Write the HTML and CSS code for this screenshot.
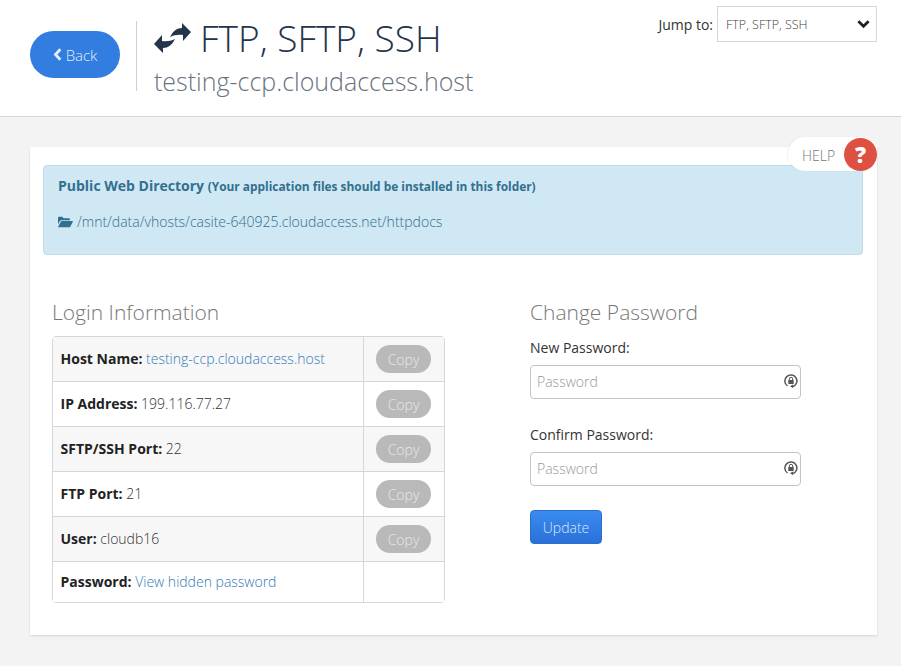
FILE: index.html
```html
<!DOCTYPE html>
<html lang="en">
<head>
  <meta charset="UTF-8" />
  <title>FTP, SFTP, SSH</title>
  <link rel="stylesheet" href="styles.css">
</head>
<body>
  <header class="top-bar">
    <a class="back-btn" href="#">
      <svg class="back-icon" viewBox="0 0 10 16"><path d="M8.500 1.500 2.500 8l6 6.500" fill="none" stroke="currentColor" stroke-width="3.400"/></svg>
      Back
    </a>
    <div class="title-block">
      <h1>
        <svg class="title-icon" viewBox="0 0 37 30"><path d="M37 9 28 0v5C23 5 19 8 16 14c4-2 8-2.500 13-2v6z" fill="#24344a"/><path d="M0 21l9 9v-5c5 0 9-3 12-9-4 2-8 2.500-13 2v-6z" fill="#24344a"/></svg>
        FTP, SFTP, SSH
      </h1>
      <p class="subtitle">testing-ccp.cloudaccess.host</p>
    </div>
    <div class="jump">
      <span>Jump to:</span>
      <div class="jump-select">
        FTP, SFTP, SSH
        <svg class="chevron" viewBox="0 0 14 10"><path d="M1.500 2 7 7.500 12.500 2" fill="none" stroke="#222" stroke-width="3"/></svg>
      </div>
    </div>
  </header>

  <main class="card">
    <div class="help">
      <span>HELP</span>
      <b class="help-dot">?</b>
    </div>

    <div class="alert">
      <p class="alert-title"><strong>Public Web Directory</strong> <small>(Your application files should be installed in this folder)</small></p>
      <p class="alert-path">
        <svg class="folder" viewBox="0 0 16 12"><path d="M0 2c0-1 .5-1.500 1.500-1.500h3L6 2h5.500c.8 0 1.200.4 1.200 1.200V4H4C3 4 2.500 4.300 2 5L0 8.500zM4 5h11c.8 0 1 .5.600 1.200L13 11c-.3.5-.7.700-1.300.7H1c-.8 0-1-.5-.6-1.200L3 5.700C3.300 5.200 3.500 5 4 5z" fill="#31708f"/></svg>
        /mnt/data/vhosts/casite-640925.cloudaccess.net/httpdocs
      </p>
    </div>

    <div class="columns">
      <section class="login">
        <h2>Login Information</h2>
        <table class="info-table">
          <tr>
            <td class="info-cell"><strong>Host Name:</strong> <a href="#">testing-ccp.cloudaccess.host</a></td>
            <td class="copy-cell"><button class="copy-btn">Copy</button></td>
          </tr>
          <tr>
            <td class="info-cell"><strong>IP Address:</strong> 199.116.77.27</td>
            <td class="copy-cell"><button class="copy-btn">Copy</button></td>
          </tr>
          <tr>
            <td class="info-cell"><strong>SFTP/SSH Port:</strong> 22</td>
            <td class="copy-cell"><button class="copy-btn">Copy</button></td>
          </tr>
          <tr>
            <td class="info-cell"><strong>FTP Port:</strong> 21</td>
            <td class="copy-cell"><button class="copy-btn">Copy</button></td>
          </tr>
          <tr>
            <td class="info-cell"><strong>User:</strong> cloudb16</td>
            <td class="copy-cell"><button class="copy-btn">Copy</button></td>
          </tr>
          <tr class="last-row">
            <td class="info-cell"><strong>Password:</strong> <a href="#">View hidden password</a></td>
            <td class="copy-cell"></td>
          </tr>
        </table>
      </section>

      <section class="password">
        <h2>Change Password</h2>
        <label class="field-label">New Password:</label>
        <div class="field">
          <span class="placeholder">Password</span>
          <svg class="lock-icon" viewBox="0 0 14 14"><path d="M3.500 12A6 6 0 1 1 8.500 12.800" fill="none" stroke="#555" stroke-width="1.500"/><path d="M9 10.500V14L6 12.300z" fill="#555"/><rect x="4.300" y="6" width="5.400" height="4" rx=".5" fill="#555"/><path d="M5.300 6.500V5a1.700 1.700 0 0 1 3.400 0v1.500" fill="none" stroke="#555"/></svg>
        </div>
        <label class="field-label">Confirm Password:</label>
        <div class="field">
          <span class="placeholder">Password</span>
          <svg class="lock-icon" viewBox="0 0 14 14"><path d="M3.500 12A6 6 0 1 1 8.500 12.800" fill="none" stroke="#555" stroke-width="1.500"/><path d="M9 10.500V14L6 12.300z" fill="#555"/><rect x="4.300" y="6" width="5.400" height="4" rx=".5" fill="#555"/><path d="M5.300 6.500V5a1.700 1.700 0 0 1 3.400 0v1.500" fill="none" stroke="#555"/></svg>
        </div>
        <button class="update-btn">Update</button>
      </section>
    </div>
  </main>
</body>
</html>
```

FILE: styles.css
```css
html, body {
  height: 100%;
}

body {
  margin: 0;
  padding: 0;
  font-family: 'Open Sans', sans-serif;
  font-size: 14px;
  color: #333;
  background-color: #f3f3f3;
  overflow: hidden;
}

.top-bar {
  display: flex;
  align-items: flex-start;
  height: 116px;
  padding: 0 24px 0 30px;
  background: #fff;
  border-bottom: 1px solid #d6d6d6;
}

.back-btn {
  display: flex;
  align-items: center;
  justify-content: center;
  gap: 4px;
  width: 90px;
  height: 47px;
  margin-top: 31px;
  border-radius: 24px;
  background: #317de0;
  color: #e6effb;
  font-size: 15px;
  font-weight: 300;
  text-decoration: none;
}

.back-icon {
  width: 9px;
  height: 13px;
}

.title-block {
  height: 70px;
  margin: 21px 0 0 16px;
  padding-left: 17px;
  border-left: 1px solid #d0d0d0;
  flex: 1;
}

h1 {
  display: flex;
  align-items: center;
  gap: 9px;
  margin: -1px 0 0;
  font-size: 37px;
  font-weight: 300;
  line-height: 36px;
  color: #24344a;
}

.title-icon {
  width: 37px;
  height: 30px;
}

.subtitle {
  margin: 8px 0 0;
  font-size: 25px;
  font-weight: 300;
  line-height: 34px;
  color: #69727f;
}

.jump {
  display: flex;
  align-items: center;
  gap: 4px;
  margin-top: 6px;
  font-size: 14px;
}

.jump-select {
  display: flex;
  align-items: center;
  justify-content: space-between;
  box-sizing: border-box;
  width: 160px;
  height: 36px;
  padding: 0 6px 0 8px;
  border: 1px solid #d6d6d6;
  font-size: 12.500px;
  font-weight: 300;
  color: #444;
}

.chevron {
  width: 13px;
  height: 10px;
}

.card {
  position: relative;
  margin: 30px 24px 0 30px;
  height: 488px;
  box-sizing: border-box;
  padding: 18px 14px 0 13px;
  background: #fff;
  box-shadow: 0 1px 2px rgba(0, 0, 0, 0.12);
}

.help {
  position: absolute;
  top: -10px;
  right: 0;
  display: flex;
  align-items: center;
  justify-content: space-between;
  box-sizing: border-box;
  width: 89px;
  height: 34px;
  padding-left: 14px;
  border-radius: 17px;
  background: #fff;
  box-shadow: -1px 0 2px rgba(0, 0, 0, 0.05);
  font-size: 14px;
  font-weight: 300;
  color: #777;
}

.help span {
  padding-top: 2px;
}

.help-dot {
  display: block;
  width: 33px;
  height: 33px;
  border-radius: 50%;
  background: #de5041;
  color: #fff;
  font-size: 22px;
  font-weight: 800;
  line-height: 33px;
  text-align: center;
}

.alert {
  box-sizing: border-box;
  height: 90px;
  padding: 11px 14px;
  background: #d0e7f4;
  border: 1px solid #bcdde9;
  border-radius: 4px;
  color: #31708f;
}

.alert p {
  margin: 0;
}

.alert-title {
  font-size: 14px;
  line-height: 17px;
}

.alert-title small {
  font-size: 11.900px;
  font-weight: 700;
}

.alert-path {
  margin-top: 17px !important;
  font-weight: 300;
  line-height: 20px;
  display: flex;
  align-items: center;
  gap: 4px;
}

.folder {
  width: 15px;
  height: 12px;
}

.columns {
  display: flex;
  margin-top: 42px;
  padding-left: 9px;
}

h2 {
  margin: 0 0 9px;
  font-size: 21px;
  font-weight: 300;
  line-height: 30px;
  color: #777;
}

.login {
  width: 393px;
}

.info-table {
  width: 393px;
  border-collapse: separate;
  border-spacing: 0;
  border: 1px solid #d6d6d6;
  border-radius: 4px;
  font-weight: 300;
}

.info-table td {
  height: 44px;
  padding: 0;
  border-bottom: 1px solid #d6d6d6;
}

.info-table .info-cell {
  height: 42px;
  padding: 0 8px 2px 7.500px;
}

.info-table strong {
  font-weight: 700;
  color: #222;
}

.info-table tr:nth-child(odd) td {
  background: #f7f7f7;
}

.info-table .last-row td {
  height: 40px;
  border-bottom: none;
  background: #fff;
}

.info-table .last-row .info-cell {
  height: 38px;
}

.info-table a {
  color: #337ab7;
  text-decoration: none;
}

.copy-cell {
  width: 81px;
  border-left: 1px solid #d6d6d6;
  padding-right: 1px !important;
  text-align: center;
  box-sizing: border-box;
}

.copy-btn {
  width: 55px;
  height: 28px;
  padding: 0;
  border: none;
  border-radius: 14px;
  background: #b9b9b9;
  color: #e8e8e8;
  font-family: inherit;
  font-size: 14px;
  font-weight: 300;
  vertical-align: middle;
}

.password {
  width: 271px;
  margin-left: 85px;
}

.field-label {
  display: block;
  margin-top: 11px;
  font-size: 14px;
  line-height: 20px;
  color: #333;
}

.field {
  display: flex;
  align-items: center;
  justify-content: space-between;
  box-sizing: border-box;
  height: 34px;
  margin: 7px 0 26px;
  padding: 0 2px 2px 6px;
  border: 1px solid #c4c4c4;
  border-radius: 4px;
}

.field + .field-label {
  margin-top: 0;
}

.placeholder {
  font-weight: 300;
  color: #999;
}

.lock-icon {
  width: 14px;
  height: 14px;
}

.update-btn {
  display: block;
  width: 72px;
  height: 34px;
  margin-top: -2px;
  padding: 0;
  border: 1px solid #2a6fc9;
  border-radius: 4px;
  background: linear-gradient(#3b8cf0, #2a70d8);
  color: #dbe8fa;
  font-family: inherit;
  font-size: 14px;
  font-weight: 300;
}
```
